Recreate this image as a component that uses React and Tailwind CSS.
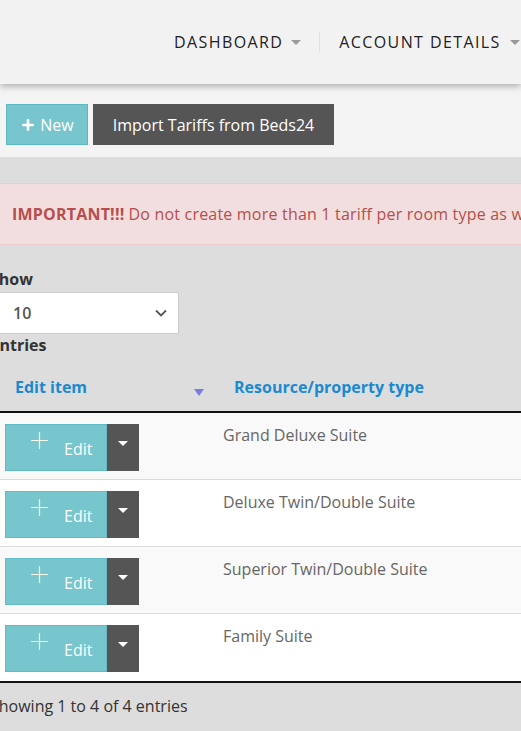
import { Plus } from 'lucide-react'

const rows = [
  'Grand Deluxe Suite',
  'Deluxe Twin/Double Suite',
  'Superior Twin/Double Suite',
  'Family Suite',
]

const Caret = ({ className }) => (
  <span className={`inline-block w-0 h-0 border-x-[5px] border-x-transparent border-t-[5px] ${className}`} />
)

const EditButton = () => (
  <div className="flex h-[47px]">
    <button className="w-[102px] h-full bg-[#77c5cd] border border-[#62bac4] flex items-center text-white">
      <Plus size={27} strokeWidth={1.1} className="ml-[20px] -mt-[14px] text-[#f4f9e8]" />
      <span className="ml-[11px] mt-[2px] text-[16px]">Edit</span>
    </button>
    <button className="w-[32px] h-full bg-[#555555] flex items-start justify-center pt-[17px]">
      <Caret className="border-t-white" />
    </button>
  </div>
)

export default function App() {
  return (
    <div className="w-[521px] h-[731px] overflow-hidden bg-[#dddddd] font-['Open_Sans',sans-serif] text-[16px]">
      {/* top nav */}
      <header className="relative z-10 h-[84px] bg-[#f2f2f2] shadow-[0_3px_6px_rgba(0,0,0,0.25)] flex items-center pl-[174px] whitespace-nowrap text-[#222]">
        <div className="flex items-center tracking-[1.4px]">
          DASHBOARD
          <Caret className="ml-[8px] border-t-[#999]" />
        </div>
        <div className="w-px h-[20px] bg-[#e2e2e2] ml-[18px] mr-[19px]" />
        <div className="flex items-center tracking-[1.4px]">
          ACCOUNT DETAILS
          <Caret className="ml-[9px] border-t-[#999]" />
        </div>
      </header>

      {/* toolbar */}
      <div className="h-[73px] bg-[#f4f4f4] pt-[20px] pl-[6px] flex items-start gap-[5px] whitespace-nowrap">
        <button className="h-[41px] w-[82px] bg-[#77c5cd] border border-[#5cb9c3] text-white flex items-center justify-center gap-[4px]">
          <Plus size={16} strokeWidth={4} />
          New
        </button>
        <button className="h-[41px] w-[241px] bg-[#555555] text-white">Import Tariffs from Beds24</button>
      </div>

      {/* alert */}
      <div className="mt-[26px] -ml-[2px] w-[600px] h-[62px] bg-[#f2dede] border border-[#ebccd1] flex items-center pl-[13px] whitespace-nowrap text-[#b84d4b] tracking-[0.2px]">
        <strong className="font-bold mr-[4px]">IMPORTANT!!!</strong> Do not create more than 1 tariff per room type as well
      </div>

      <div className="-ml-[10px] mt-[23px] text-[#333]">
        <div className="font-bold leading-[22px]">Show</div>
        <div className="mt-[2px] w-[189px] h-[42px] bg-white border border-[#cccccc] flex items-center justify-between pl-[22px] pr-[11px] text-[#555] font-semibold">
          10
          <svg width="12" height="8" viewBox="0 0 12 8" fill="none" stroke="#555" strokeWidth="1.8">
            <path d="M1 1.5l5 5 5-5" />
          </svg>
        </div>
        <div className="font-bold leading-[22px]">entries</div>

        {/* table */}
        <div className="mt-[15px] w-[640px]">
          <div className="flex h-[42px] border-b-2 border-[#111] font-bold text-[#1a8ad0] pt-[4px]">
            <div className="relative w-[225px] pl-[25px]">
              Edit item
              <span className="absolute left-[204px] top-[14px] w-0 h-0 border-x-[5px] border-x-transparent border-t-[7px] border-t-[#7b7be6]" />
            </div>
            <div className="pl-[19px]">Resource/property type</div>
          </div>
          {rows.map((name, i) => (
            <div
              key={name}
              className={`flex h-[67px] ${i < rows.length - 1 ? 'border-b border-[#dddddd]' : ''} ${i % 2 === 0 ? 'bg-[#f9f9f9]' : 'bg-white'}`}
            >
              <div className="w-[225px] pl-[15px] pt-[11px]">
                <EditButton />
              </div>
              <div className="pl-[8px] pt-[10px] text-[#666] whitespace-nowrap">{name}</div>
            </div>
          ))}
          <div className="border-t-2 border-[#111]" />
        </div>

        <div className="pt-[11px] text-[#333] whitespace-nowrap">Showing 1 to 4 of 4 entries</div>
      </div>
    </div>
  )
}
